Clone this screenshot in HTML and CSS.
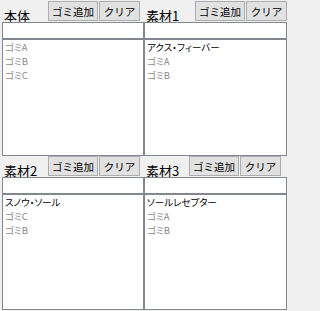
FILE: index.html
```html
<!DOCTYPE html>
<html lang="ja">
<head>
<meta charset="utf-8">
<link rel="stylesheet" href="styles.css">
</head>
<body>
<div class="grid">
  <section class="panel panel--a">
    <div class="head"><span class="label">本体</span><button class="btn btn--add">ゴミ追加</button><button class="btn btn--clear">クリア</button></div>
    <input class="field" type="text">
    <ul class="list">
      <li class="item item--junk">ゴミA</li>
      <li class="item item--junk">ゴミB</li>
      <li class="item item--junk">ゴミC</li>
    </ul>
  </section>
  <section class="panel panel--b">
    <div class="head"><span class="label">素材1</span><button class="btn btn--add">ゴミ追加</button><button class="btn btn--clear">クリア</button></div>
    <input class="field" type="text">
    <ul class="list">
      <li class="item">アクス・フィーバー</li>
      <li class="item item--junk">ゴミA</li>
      <li class="item item--junk">ゴミB</li>
    </ul>
  </section>
  <section class="panel panel--c">
    <div class="head"><span class="label">素材2</span><button class="btn btn--add">ゴミ追加</button><button class="btn btn--clear">クリア</button></div>
    <input class="field" type="text">
    <ul class="list">
      <li class="item">スノウ・ソール</li>
      <li class="item item--junk">ゴミC</li>
      <li class="item item--junk">ゴミB</li>
    </ul>
  </section>
  <section class="panel panel--d">
    <div class="head"><span class="label">素材3</span><button class="btn btn--add">ゴミ追加</button><button class="btn btn--clear">クリア</button></div>
    <input class="field" type="text">
    <ul class="list">
      <li class="item">ソールレセプター</li>
      <li class="item item--junk">ゴミA</li>
      <li class="item item--junk">ゴミB</li>
    </ul>
  </section>
</div>
</body>
</html>
```

FILE: styles.css
```css
html, body {
  margin: 0;
  padding: 0;
  background: #f0f0f0;
}
body {
  font-family: "Noto Sans CJK JP", "Noto Sans", sans-serif;
  font-feature-settings: "palt";
  width: 288px;
  height: 311px;
  overflow: hidden;
}
.grid {
  display: grid;
  grid-template-columns: 142px 143px;
  grid-template-rows: 156px 154px;
  padding: 0 1px 1px 2px;
}
.panel {
  display: flex;
  flex-direction: column;
  min-height: 0;
}
.head {
  height: 22px;
  flex: 0 0 22px;
  display: flex;
  align-items: flex-end;
  box-sizing: border-box;
}
.panel--c .head, .panel--d .head {
  height: 21px;
  flex-basis: 21px;
}
.label {
  font-size: 13px;
  line-height: 13px;
  color: #000;
  padding-left: 2px;
  box-sizing: border-box;
  flex: 0 0 46px;
}
.panel--b .label { flex-basis: 51px; }
.panel--d .label { flex-basis: 45px; }
.btn {
  height: 20px;
  margin: 0 0 1px 0;
  padding: 0;
  border: 1px solid #adadad;
  background: #e1e1e1;
  font-family: inherit;
  font-size: 10.5px;
  line-height: 17px;
  color: #000;
  box-sizing: border-box;
}
.btn--add { width: 50px; }
.btn--clear { width: 41px; margin-left: 1px; }
.field {
  display: block;
  height: 17px;
  flex: 0 0 17px;
  margin: 0;
  padding: 0 2px;
  border: 1px solid #828790;
  background: #fff;
  box-sizing: border-box;
  width: 100%;
  outline: none;
}
.list {
  flex: 1 1 auto;
  margin: 0;
  padding: 0 0 0 2px;
  list-style: none;
  background: #fff;
  border: 1px solid #828790;
  box-sizing: border-box;
  min-height: 0;
}
.item {
  font-size: 9.5px;
  line-height: 14px;
  height: 14px;
  color: #000;
  white-space: nowrap;
}
.item--junk {
  color: #8a8a8a;
}
```
